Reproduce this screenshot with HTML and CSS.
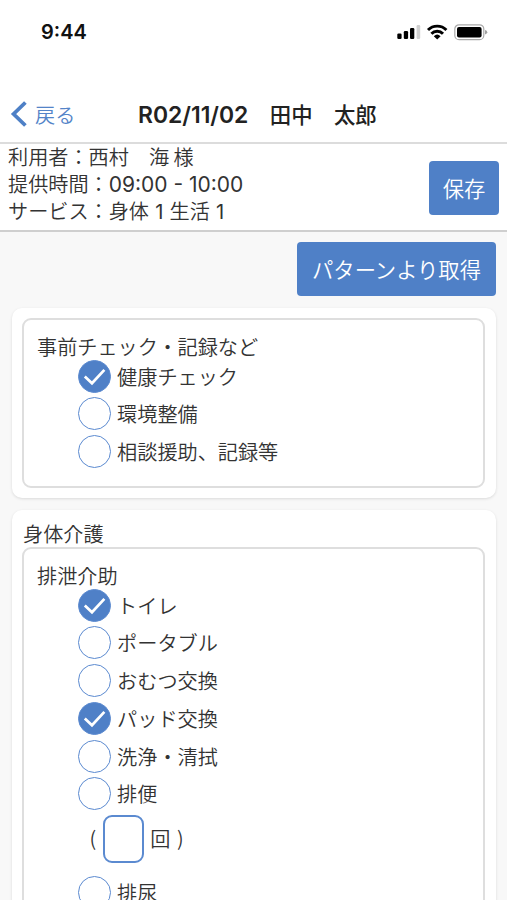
FILE: index.html
```html
<!DOCTYPE html>
<html lang="ja">
<head>
<meta charset="utf-8">
<meta name="viewport" content="width=device-width, initial-scale=1">
<title>サービス記録</title>
<link rel="stylesheet" href="styles.css">
</head>
<body>
<div class="statusbar">
  <span class="clock">9:44</span>
  <svg class="status-icons" width="92" height="18" viewBox="0 0 92 18" aria-hidden="true">
    <rect x="0.3" y="10.5" width="4.3" height="5.5" rx="1.2"/>
    <rect x="6.8" y="8" width="4.3" height="8" rx="1.2"/>
    <rect x="13" y="5" width="4.3" height="11" rx="1.2"/>
    <rect x="19.6" y="2" width="3.6" height="14" rx="1.2" fill="#d0d0d0"/>
    <g fill="none" stroke="#000" stroke-width="2.9">
      <path d="M31 7 A12.8 12.8 0 0 1 49.4 7"/>
      <path d="M34.4 10.8 A8 8 0 0 1 46 10.8"/>
    </g>
    <path d="M40.2 16.4 L36.8 13.2 A5 5 0 0 1 43.6 13.2 Z"/>
    <rect x="57.8" y="1.8" width="29" height="14.8" rx="4.2" fill="none" stroke="#a9a9a9" stroke-width="1.2"/>
    <rect x="60" y="4" width="24.6" height="10.4" rx="2"/>
    <path d="M88 7 Q90.3 7.6 90.3 9.2 Q90.3 10.8 88 11.4 Z" fill="#a0a0a0"/>
  </svg>
</div>
<header class="navbar">
  <a class="back">
    <svg width="18" height="28" viewBox="0 0 18 28" aria-hidden="true"><path d="M16.4 2.5 L4.6 14 L16.4 25.5" fill="none" stroke="#4e80c6" stroke-width="3.8"/></svg>
    <span>戻る</span>
  </a>
  <h1 class="title"><span class="date">R02/11/02</span>　田中　太郎</h1>
</header>
<section class="summary">
  <div class="details">
    <div>利用者：西村　海 様</div>
    <div>提供時間：<span class="time">09:00 - 10:00</span></div>
    <div>サービス：身体<span class="num">1</span>生活<span class="num">1</span></div>
  </div>
  <button class="btn save">保存</button>
</section>
<main class="content">
  <div class="toolbar"><button class="btn pattern">パターンより取得</button></div>
  <section class="card">
    <div class="group">
      <h3 class="label">事前チェック・記録など</h3>
      <ul class="checks">
        <li><span class="radio on"><svg viewBox="0 0 32 32"><path d="M6 16 L13.4 23 L26.2 9.2"/></svg></span>健康チェック</li>
        <li><span class="radio"></span>環境整備</li>
        <li><span class="radio"></span>相談援助、記録等</li>
      </ul>
    </div>
  </section>
  <section class="card care">
    <h2 class="label">身体介護</h2>
    <div class="group">
      <h3 class="label">排泄介助</h3>
      <ul class="checks">
        <li><span class="radio on"><svg viewBox="0 0 32 32"><path d="M6 16 L13.4 23 L26.2 9.2"/></svg></span>トイレ</li>
        <li><span class="radio"></span>ポータブル</li>
        <li><span class="radio"></span>おむつ交換</li>
        <li><span class="radio on"><svg viewBox="0 0 32 32"><path d="M6 16 L13.4 23 L26.2 9.2"/></svg></span>パッド交換</li>
        <li><span class="radio"></span>洗浄・清拭</li>
        <li><span class="radio"></span>排便</li>
        <li class="count"><span class="paren">(</span><input class="times" type="text" aria-label="回数"><span>回</span><span class="paren">)</span></li>
        <li><span class="radio"></span>排尿</li>
      </ul>
    </div>
  </section>
</main>
</body>
</html>
```
FILE: styles.css
```css
* { box-sizing: border-box; }

html, body { height: 100%; }

body {
  margin: 0;
  display: flex;
  flex-direction: column;
  overflow: hidden;
  background: #fff;
  color: #333;
  font-family: "Noto Sans CJK JP", sans-serif;
  font-size: 20.15px;
  font-weight: 350;
}

.statusbar {
  flex: none;
  height: 64px;
  padding: 0 18px 0 41px;
  display: flex;
  align-items: center;
  justify-content: space-between;
}

.clock {
  font: 600 20px Inter, sans-serif;
  color: #111;
}

.navbar {
  flex: none;
  height: 80px;
  padding: 21px 12px 0 9px;
  display: flex;
  align-items: center;
  border-bottom: 2px solid #dcdcdc;
}

.back {
  width: 129px;
  display: flex;
  align-items: center;
  gap: 8px;
  color: #5484c8;
  line-height: 28px;
}

.back span { padding-top: 2px; }

.title {
  margin: 0;
  padding-top: 1px;
  font-size: 21.4px;
  font-weight: 500;
  line-height: 28px;
  color: #222;
  white-space: nowrap;
}

.date {
  font-family: Inter, sans-serif;
  font-size: 22.9px;
  font-weight: 600;
}

.summary {
  flex: none;
  height: 88px;
  padding: 0 8px;
  display: flex;
  justify-content: space-between;
  border-bottom: 2px solid #cfcfcf;
}

.details { margin-top: -1px; line-height: 27px; white-space: nowrap; }
.details > div { height: 27px; }
.time, .num { font-family: Inter, sans-serif; font-weight: 400; }
.time { font-size: 21px; }
.num { display: inline-block; width: 20.5px; text-align: center; }

.btn {
  border: 0;
  border-radius: 4px;
  height: 54px;
  padding: 0 0 2px;
  background: #4f80c7;
  color: #fff;
  font: 350 21.3px "Noto Sans CJK JP", sans-serif;
}

.save { width: 70px; margin-top: 17px; }
.pattern { width: 199px; }

.content {
  flex: 1;
  min-height: 0;
  overflow: hidden;
  padding: 10px 11px 0 12px;
  background: #f8f8f8;
}

.toolbar { display: flex; justify-content: flex-end; margin-bottom: 12px; }

.card {
  height: 190px;
  padding: 10px 11px 10px 10px;
  margin-bottom: 12px;
  border-radius: 10px;
  background: #fff;
  box-shadow: 0 1px 3px rgba(0, 0, 0, .12);
}

.care { height: 600px; padding-top: 9px; }

.group {
  height: 170px;
  padding: 14px 13px;
  border: 2px solid #dedede;
  border-radius: 9px;
}

.care .group { height: 500px; }

.label {
  margin: 0;
  font-size: inherit;
  font-weight: inherit;
  line-height: 28px;
  white-space: nowrap;
}

h2.label { height: 28px; padding-left: 1px; line-height: 29px; }
h3.label { height: 25px; line-height: 25px; }

.checks {
  list-style: none;
  margin: 1px 0 0;
  padding: 0 0 0 40.6px;
}

.checks li {
  height: 32px;
  margin-bottom: 5.75px;
  display: flex;
  align-items: center;
  gap: 6.5px;
  white-space: nowrap;
}

.radio {
  width: 33px;
  height: 33px;
  flex: none;
  border: 1.6px solid #5b8ad0;
  border-radius: 50%;
}

.on { background: #4f80c7; }
.on svg { display: block; width: 100%; height: 100%; }
.on path { fill: none; stroke: #fff; stroke-width: 2.8; }

.checks .count {
  height: 48px;
  margin: -1px 0 14px;
  padding-left: 12px;
}

.paren { padding-bottom: 3px; }

.times {
  width: 41px;
  height: 48px;
  border: 2px solid #5b8ad0;
  border-radius: 9px;
  background: #fff;
}
```
